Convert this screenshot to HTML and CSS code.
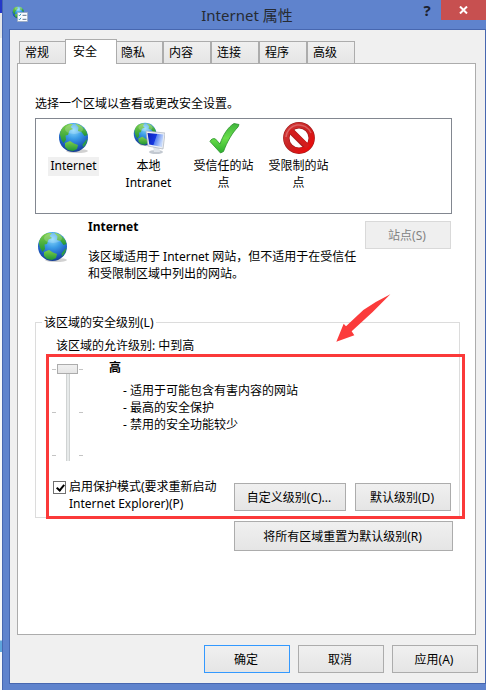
FILE: index.html
```html
<!DOCTYPE html>
<html lang="zh-CN">
<head>
    <meta charset="UTF-8">
    <meta name="viewport" content="width=device-width, initial-scale=1">
    <title>Internet 属性</title>
    <link rel="stylesheet" href="styles.css">
</head>
<body>

    <!-- 公用图标 -->
    <svg class="defs" width="0" height="0" aria-hidden="true">
        <defs>
            <radialGradient id="sea" cx="0.5" cy="0.25" r="0.75">
                <stop offset="0" stop-color="#8ad9fc"/>
                <stop offset="0.4" stop-color="#3a9be6"/>
                <stop offset="0.8" stop-color="#1c58bd"/>
                <stop offset="1" stop-color="#173d8e"/>
            </radialGradient>
            <linearGradient id="land" x1="0" y1="0" x2="0" y2="1">
                <stop offset="0" stop-color="#7fd04a"/>
                <stop offset="1" stop-color="#1f9436"/>
            </linearGradient>
            <linearGradient id="tick" x1="0" y1="0" x2="0" y2="1">
                <stop offset="0" stop-color="#3fb53c"/>
                <stop offset="0.5" stop-color="#6ade4b"/>
                <stop offset="1" stop-color="#2cae2c"/>
            </linearGradient>
            <linearGradient id="stop" x1="0" y1="0" x2="1" y2="1">
                <stop offset="0" stop-color="#d23a3a"/>
                <stop offset="0.5" stop-color="#c92020"/>
                <stop offset="1" stop-color="#f00808"/>
            </linearGradient>
            <linearGradient id="screen" x1="0" y1="0" x2="1" y2="0.3">
                <stop offset="0" stop-color="#0a1fb4"/>
                <stop offset="0.55" stop-color="#1638e0"/>
                <stop offset="0.6" stop-color="#5b84f0"/>
                <stop offset="1" stop-color="#c4d8fc"/>
            </linearGradient>
            <symbol id="globe" viewBox="0 0 32 32">
                <ellipse cx="19" cy="29" rx="11" ry="2" fill="#000" opacity="0.18"/>
                <circle cx="15.5" cy="15.5" r="14.5" fill="url(#sea)"/>
                <path d="M2 13C2 7 6 3 11 2L15 2 12.5 5 15 7 11.5 8.5 10 13 7.5 13.500 8 18 5.5 21 3.5 18Z" fill="url(#land)"/>
                <path d="M17 1.5L23 3.5 28 8.5 29.5 13 26.5 14 23.5 10 20 9 20.5 5.5Z" fill="url(#land)"/>
                <path d="M7 21L12 19 16 21.5 20 23 19 27 15 29 10 28 7 25Z" fill="url(#land)"/>
                <path d="M28 18L29.5 17 28 22 25 25.5 24.5 22.5Z" fill="#2b9b4a"/>
                <ellipse cx="16" cy="7" rx="9" ry="5" fill="#fff" opacity="0.2"/>
            </symbol>
        </defs>
    </svg>

    <div class="window">
        <header class="titlebar">
            <svg class="title-icon" viewBox="0 0 16 16" aria-hidden="true">
                <use href="#globe" x="0" y="0" width="13" height="13"/>
                <rect x="5.5" y="6.5" width="10" height="9" fill="#fafcff" stroke="#9aa7b8" stroke-width="0.7"/>
                <path d="M6.5 8.8l1 1 1.5-2M6.5 12.8l1 1 1.5-2" fill="none" stroke="#2f95c4"/>
                <path d="M10.5 9.3h4M10.5 13.3h4" stroke="#5c7088"/>
            </svg>
            <h1 class="title">Internet 属性</h1>
            <div class="title-controls">
                <button type="button" class="help-btn" aria-label="帮助">?</button>
                <button type="button" class="close-btn" aria-label="关闭">
                    <svg width="9" height="8" viewBox="0 0 9 8"><path d="M1 0.5L8 7.5M8 0.5L1 7.5" stroke="#fff" stroke-width="2"/></svg>
                </button>
            </div>
        </header>

        <div class="client">
            <div class="tabs" role="tablist">
                <button type="button" class="tab" role="tab">常规</button>
                <button type="button" class="tab active" role="tab" aria-selected="true">安全</button>
                <button type="button" class="tab" role="tab">隐私</button>
                <button type="button" class="tab" role="tab">内容</button>
                <button type="button" class="tab" role="tab">连接</button>
                <button type="button" class="tab" role="tab">程序</button>
                <button type="button" class="tab" role="tab">高级</button>
            </div>

            <main class="panel" role="tabpanel">
                <p>选择一个区域以查看或更改安全设置。</p>

                <!-- 区域列表 -->
                <ul class="zones">
                    <li class="zone selected">
                        <svg class="icon" aria-hidden="true"><use href="#globe"/></svg>
                        <span>Internet</span>
                    </li>
                    <li class="zone">
                        <svg class="icon" viewBox="0 0 32 32" aria-hidden="true">
                            <use href="#globe" x="0" y="0" width="25" height="25"/>
                            <ellipse cx="23" cy="30" rx="7" ry="2" fill="#c3c9d1"/>
                            <path d="M20 24h6l1 6h-6z" fill="#dfe4ea"/>
                            <path d="M13 9L32 11 30 27 15 24z" fill="#eef1f5" stroke="#aab2bd" stroke-width="0.7"/>
                            <path d="M14.5 11L30.500 12.500 29 25 16.300 22.500z" fill="url(#screen)"/>
                        </svg>
                        <span>本地 Intranet</span>
                    </li>
                    <li class="zone">
                        <svg class="icon" viewBox="0 0 32 32" aria-hidden="true">
                            <path d="M2 19.5C3 17 5.5 16 7.500 17L12 22C15 13 20 5 26 1.500L31 2.500 30 5C24 11 19 20 15.500 29.500L12.500 31Z" fill="url(#tick)" stroke="#2a8f2c" stroke-width="0.8"/>
                        </svg>
                        <span>受信任的站点</span>
                    </li>
                    <li class="zone">
                        <svg class="icon" viewBox="0 0 32 32" aria-hidden="true">
                            <circle cx="16" cy="16" r="12.7" fill="#fff" stroke="#a51a1a" stroke-width="6.4"/>
                            <path d="M7 8L24 25" stroke="#a51a1a" stroke-width="6.4"/>
                            <circle cx="16" cy="16" r="12.7" fill="none" stroke="url(#stop)" stroke-width="5"/>
                            <path d="M7 8L25 25" stroke="#d31d1d" stroke-width="5"/>
                            <path d="M3 15A13 13 0 0 1 28 11" fill="none" stroke="#fff" stroke-width="1.5" opacity="0.25"/>
                        </svg>
                        <span>受限制的站点</span>
                    </li>
                </ul>

                <section class="detail">
                    <svg class="icon" aria-hidden="true"><use href="#globe"/></svg>
                    <div class="detail-text">
                        <h2>Internet</h2>
                        <p>该区域适用于 Internet 网站，但不适用于在受信任和受限制区域中列出的网站。</p>
                    </div>
                    <button type="button" class="btn" disabled>站点(S)</button>
                </section>

                <!-- 安全级别 -->
                <div class="group-wrap">
                    <fieldset class="group">
                        <legend>该区域的安全级别(L)</legend>
                        <p class="allowed">该区域的允许级别: 中到高</p>
                        <div class="level">
                            <div class="slider">
                                <div class="ticks"><i></i><i></i><i></i></div>
                                <input type="range" min="0" max="2" value="2" aria-label="安全级别">
                                <div class="ticks"><i></i><i></i><i></i></div>
                            </div>
                            <div class="level-text">
                                <h3>高</h3>
                                <ul>
                                    <li>- 适用于可能包含有害内容的网站</li>
                                    <li>- 最高的安全保护</li>
                                    <li>- 禁用的安全功能较少</li>
                                </ul>
                            </div>
                        </div>
                        <div class="protect">
                            <input type="checkbox" id="protected" checked>
                            <label for="protected">启用保护模式(要求重新启动<br>Internet Explorer)(P)</label>
                            <div class="protect-btns">
                                <button type="button" class="btn custom">自定义级别(C)...</button>
                                <button type="button" class="btn default">默认级别(D)</button>
                            </div>
                        </div>
                    </fieldset>
                    <div class="mark"></div>
                    <svg class="arrow" viewBox="290 238 165 144" aria-hidden="true">
                        <path d="M291 381L313 327 320 335 372 286Q410 260 453 239L400 292 337 350 345 362Z" fill="#fb3b3b"/>
                    </svg>
                </div>

                <button type="button" class="btn reset">将所有区域重置为默认级别(R)</button>
            </main>

            <footer class="footer">
                <button type="button" class="btn primary">确定</button>
                <button type="button" class="btn">取消</button>
                <button type="button" class="btn">应用(A)</button>
            </footer>
        </div>
    </div>

</body>
</html>
```
FILE: styles.css
```css
:root {
    --blue: #5f83cd;
    --blue-dark: #4767b0;
    --face: #f0f0f0;
    --line: #acacac;
    --red: #fb3939;
}

* {
    box-sizing: border-box;
}

body {
    margin: 0;
    padding-left: 2px;
    font-family: "Noto Sans", "Noto Sans CJK SC", sans-serif;
    font-size: 12px;
    line-height: 17px;
    color: #000;
    /* 窗口左侧露出的桌面 */
    background: linear-gradient(#2438c8 13px, #e4e6ea 13px, #e4e6ea 38px, #f6f7f9 38px, #f6f7f9 640px, #5ea5dc 641px, #5ea5dc 652px, #f6f7f9 652px);
}

h1, h2, h3, p, ul {
    margin: 0;
    padding: 0;
    font-size: inherit;
}

ul {
    list-style: none;
}

button, input {
    margin: 0;
    font: inherit;
    color: inherit;
}

.defs {
    position: absolute;
}

.window {
    display: flex;
    flex-direction: column;
    min-height: 100vh;
    padding: 0 0 6px 6px;
    border-left: 1px solid var(--blue-dark);
    background: var(--blue);
}

/* 标题栏 */
.titlebar {
    display: grid;
    grid-template-columns: 1fr auto 1fr;
    height: 29px;
    padding: 0 0 0 3px;
}

.title-icon {
    width: 16px;
    height: 16px;
    margin-top: 6px;
}

.title {
    padding: 5px 4px 0 0;
    font-size: 15px;
    font-weight: normal;
    line-height: 20px;
    color: #262b33;
}

.title-controls {
    display: flex;
    justify-content: flex-end;
    height: 20px;
}

.help-btn {
    width: 28px;
    padding: 0;
    border: 0;
    background: none;
    font-size: 15px;
    font-weight: bold;
    line-height: 20px;
    color: #1c2230;
}

.close-btn {
    display: flex;
    justify-content: center;
    align-items: center;
    width: 45px;
    padding: 0;
    border: 0;
    background: #c75050;
}

.client {
    display: flex;
    flex: 1;
    flex-direction: column;
    padding: 9px 7px 10px;
    border: 1px solid var(--blue-dark);
    background: var(--face);
}

/* 选项卡 */
.tabs {
    display: flex;
    height: 25px;
    margin-bottom: -1px;
    padding-left: 2px;
}

.tab {
    width: 48px;
    height: 22px;
    margin-top: 2px;
    padding: 0 5px;
    border: 1px solid var(--line);
    border-bottom: 0;
    background: linear-gradient(#f0f0f0, #e5e5e5);
    text-align: left;
}

.tab.active {
    position: relative;
    z-index: 1;
    width: 52px;
    height: 25px;
    margin: 0 -2px;
    padding: 0 7px 2px;
    background: #fff;
}

.panel {
    flex: 1;
    margin-right: 2px;
    padding: 31px 15px 10px 17px;
    border: 1px solid var(--line);
    background: #fff;
}

.icon {
    display: block;
    flex: none;
    width: 32px;
    height: 32px;
}

/* 区域列表 */
.zones {
    display: flex;
    height: 96px;
    margin: 6px 8px 0 0;
    padding-top: 3px;
    border: 1px solid #828790;
}

.zone {
    display: flex;
    flex-direction: column;
    align-items: center;
    gap: 3px;
    width: 75px;
    padding: 0 5px;
    text-align: center;
}

.zone.selected span {
    padding: 0 2px 2px;
    background: var(--face);
}

.detail {
    display: flex;
    align-items: flex-start;
    margin: 4px 9px 0 2px;
}

.detail .icon {
    margin-top: 13px;
}

.detail-text {
    flex: 1;
    padding-left: 19px;
}

.detail-text p {
    margin-top: 13px;
}

.detail .btn {
    margin-top: 3px;
}

/* 按钮 */
.btn {
    flex: none;
    width: 86px;
    height: 28px;
    padding: 0 2px 0 0;
    border: 1px solid var(--line);
    background: linear-gradient(#f0f0f0, #e5e5e5);
}

.btn:disabled {
    border-color: #d9d9d9;
    background: #efefef;
    color: #838383;
}

.btn.primary {
    border-color: #3399ff;
}

.btn.custom {
    width: 112px;
}

.btn.default {
    width: 96px;
}

.btn.reset {
    display: block;
    width: 219px;
    height: 30px;
    margin: 3px 7px 0 auto;
}

/* 安全级别 */
.group-wrap {
    position: relative;
    margin-top: 32px;
}

.group {
    min-width: 0;
    margin: 0;
    padding: 6px 8px 5px 16px;
    border: 1px solid #dcdcdc;
}

.group legend {
    margin-left: -10px;
    padding: 0 2px;
}

.allowed {
    padding-left: 4px;
}

.level {
    display: flex;
    gap: 24px;
    margin-top: 5px;
}

.slider {
    display: flex;
    gap: 1px;
    height: 97px;
    margin-top: 5px;
}

.slider input {
    width: 21px;
    height: 97px;
    appearance: none;
    writing-mode: vertical-lr;
    direction: rtl;
    background: linear-gradient(90deg, #d0d3d3 1px, #e7eaea 1px, #e7eaea 3px, #d0d3d3 3px) center / 4px 100% no-repeat;
}

.slider input::-webkit-slider-thumb {
    appearance: none;
    width: 21px;
    height: 10px;
    border: 1px solid var(--line);
    background: linear-gradient(#f0f0f0, #e5e5e5);
}

.ticks {
    display: flex;
    flex-direction: column;
    justify-content: space-between;
    padding: 5px 0;
}

.ticks i {
    width: 4px;
    height: 1px;
    background: #c4c4c4;
}

.level-text {
    padding-left: 2px;
}

.level-text ul {
    margin-top: 6px;
    padding-left: 14px;
}

.protect {
    display: flex;
    align-items: flex-start;
    gap: 3px;
    margin: 17px 0 0 1px;
}

.protect input {
    position: relative;
    flex: none;
    width: 13px;
    height: 13px;
    margin-top: 3px;
    appearance: none;
    border: 1px solid #707070;
    background: #fff;
}

.protect input:checked::after {
    content: "";
    position: absolute;
    top: 1px;
    left: 4px;
    box-sizing: border-box;
    width: 5px;
    height: 8px;
    border: solid #000;
    border-width: 0 2px 2px 0;
    transform: rotate(40deg);
}

.protect-btns {
    display: flex;
    gap: 9px;
    margin: 5px 0 0 auto;
}

/* 红框和箭头标注 */
.mark {
    position: absolute;
    top: 40px;
    right: -5px;
    bottom: -1px;
    left: 11px;
    border: 3px solid var(--red);
    pointer-events: none;
}

.arrow {
    position: absolute;
    top: -20px;
    right: 69px;
    width: 55px;
    height: 48px;
}

.footer {
    display: flex;
    justify-content: flex-end;
    gap: 8px;
    margin-top: 10px;
}
```
